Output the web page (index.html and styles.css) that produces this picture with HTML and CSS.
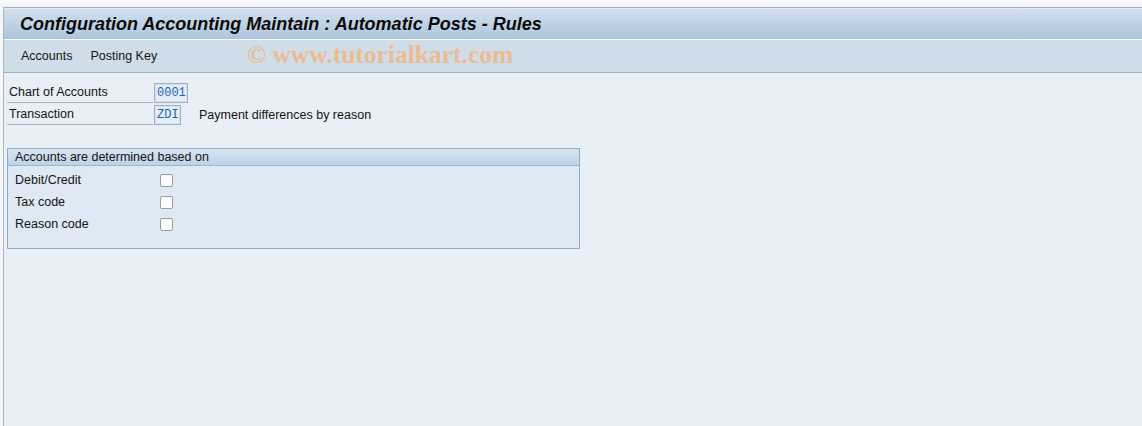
FILE: index.html
```html
<!DOCTYPE html>
<html>
	<head>
		<meta charset="UTF-8">
		<title>Configuration Accounting Maintain : Automatic Posts - Rules</title>
		<link rel="stylesheet" href="styles.css">
	</head>
	<body>
		<div class="top_strip"></div>
		<div class="window">
			<div class="title_bar">
				<h1>Configuration Accounting Maintain : Automatic Posts - Rules</h1>
			</div>
			<div class="tool_bar">
				<a href="#">Accounts</a>
				<a href="#">Posting Key</a>
				<span class="mark">&copy; www.tutorialkart.com</span>
			</div>
			<div class="content">
				<div class="field_row">
					<label>Chart of Accounts</label>
					<span class="input w4">0001</span>
				</div>
				<div class="field_row">
					<label>Transaction</label>
					<span class="input w3">ZDI</span>
					<span class="desc">Payment differences by reason</span>
				</div>

				<div class="group">
					<div class="group_head">Accounts are determined based on</div>
					<ul class="group_body">
						<li><span>Debit/Credit</span><i class="check"></i></li>
						<li><span>Tax code</span><i class="check"></i></li>
						<li><span>Reason code</span><i class="check"></i></li>
					</ul>
				</div>
			</div>
		</div>
	</body>
</html>
```

FILE: styles.css
```css
* {margin: 0;padding: 0;}
li { list-style:none; }
html, body { height:100%; }
body { background:#f4f6f9; font-family:"Liberation Sans", Arial, sans-serif; font-size:12.5px; color:#141414; display:flex; flex-direction:column; overflow:hidden; }

.top_strip { height:7px; background:linear-gradient(#fbfcfd, #eef1f5); }

.window { flex:1; margin-left:3px; border-left:1px solid #a8b6c6; border-top:1px solid #a3afbd; background:#e8eff7; display:flex; flex-direction:column; }

.title_bar { height:30px; border-top:1px solid #e6edf5; border-bottom:1px solid #f4f8fb; background:linear-gradient(#d2e0ee, #adc5dc); display:flex; align-items:center; padding-left:16px; }
.title_bar h1 { font-size:18px; font-weight:bold; font-style:italic; color:#0a0a0a; }

.tool_bar { height:32px; background:#cfdde8; border-bottom:1px solid #a2b2c8; display:flex; align-items:center; padding-left:17px; position:relative; }
.tool_bar a { color:#141414; text-decoration:none; margin-right:18px; }
.mark { position:absolute; left:243px; top:0; font-family:"Liberation Serif", "Times New Roman", serif; font-weight:bold; font-size:25.5px; color:#ebbb93; }

.content { flex:1; padding:9px 0 0 3px; }

.field_row { display:flex; align-items:center; height:22px; }
.field_row label { width:144px; height:19px; line-height:19px; padding-left:2px; border-bottom:1px solid #a8b4c0; margin-right:1px; }
.input { height:18px; line-height:18px; border:1px solid #a7afb8; box-shadow:inset 0 0 0 1px #d6e0ea; background:#e4eef8; font-family:"Liberation Mono", "Courier New", monospace; font-size:12px; color:#1d64b0; padding:0 2px; }
.input.w4 { width:28px; }
.input.w3 { width:21px; }
.desc { margin-left:18px; }

.group { width:571px; margin-top:22px; border:1px solid #93acc8; background:#dee9f3; height:99px; }
.group_head { height:16px; line-height:16px; padding-left:7px; border-bottom:1px solid #9fb6cf; background:linear-gradient(#d9e6f2, #bcd2e7); }
.group_body { padding-top:3px; }
.group_body li { display:flex; align-items:center; height:22px; padding-left:7px; }
.group_body span { width:145px; }
.check { width:11px; height:11px; border:1px solid #9a9ea4; border-radius:2px; background:#fcfcfc; }
```
